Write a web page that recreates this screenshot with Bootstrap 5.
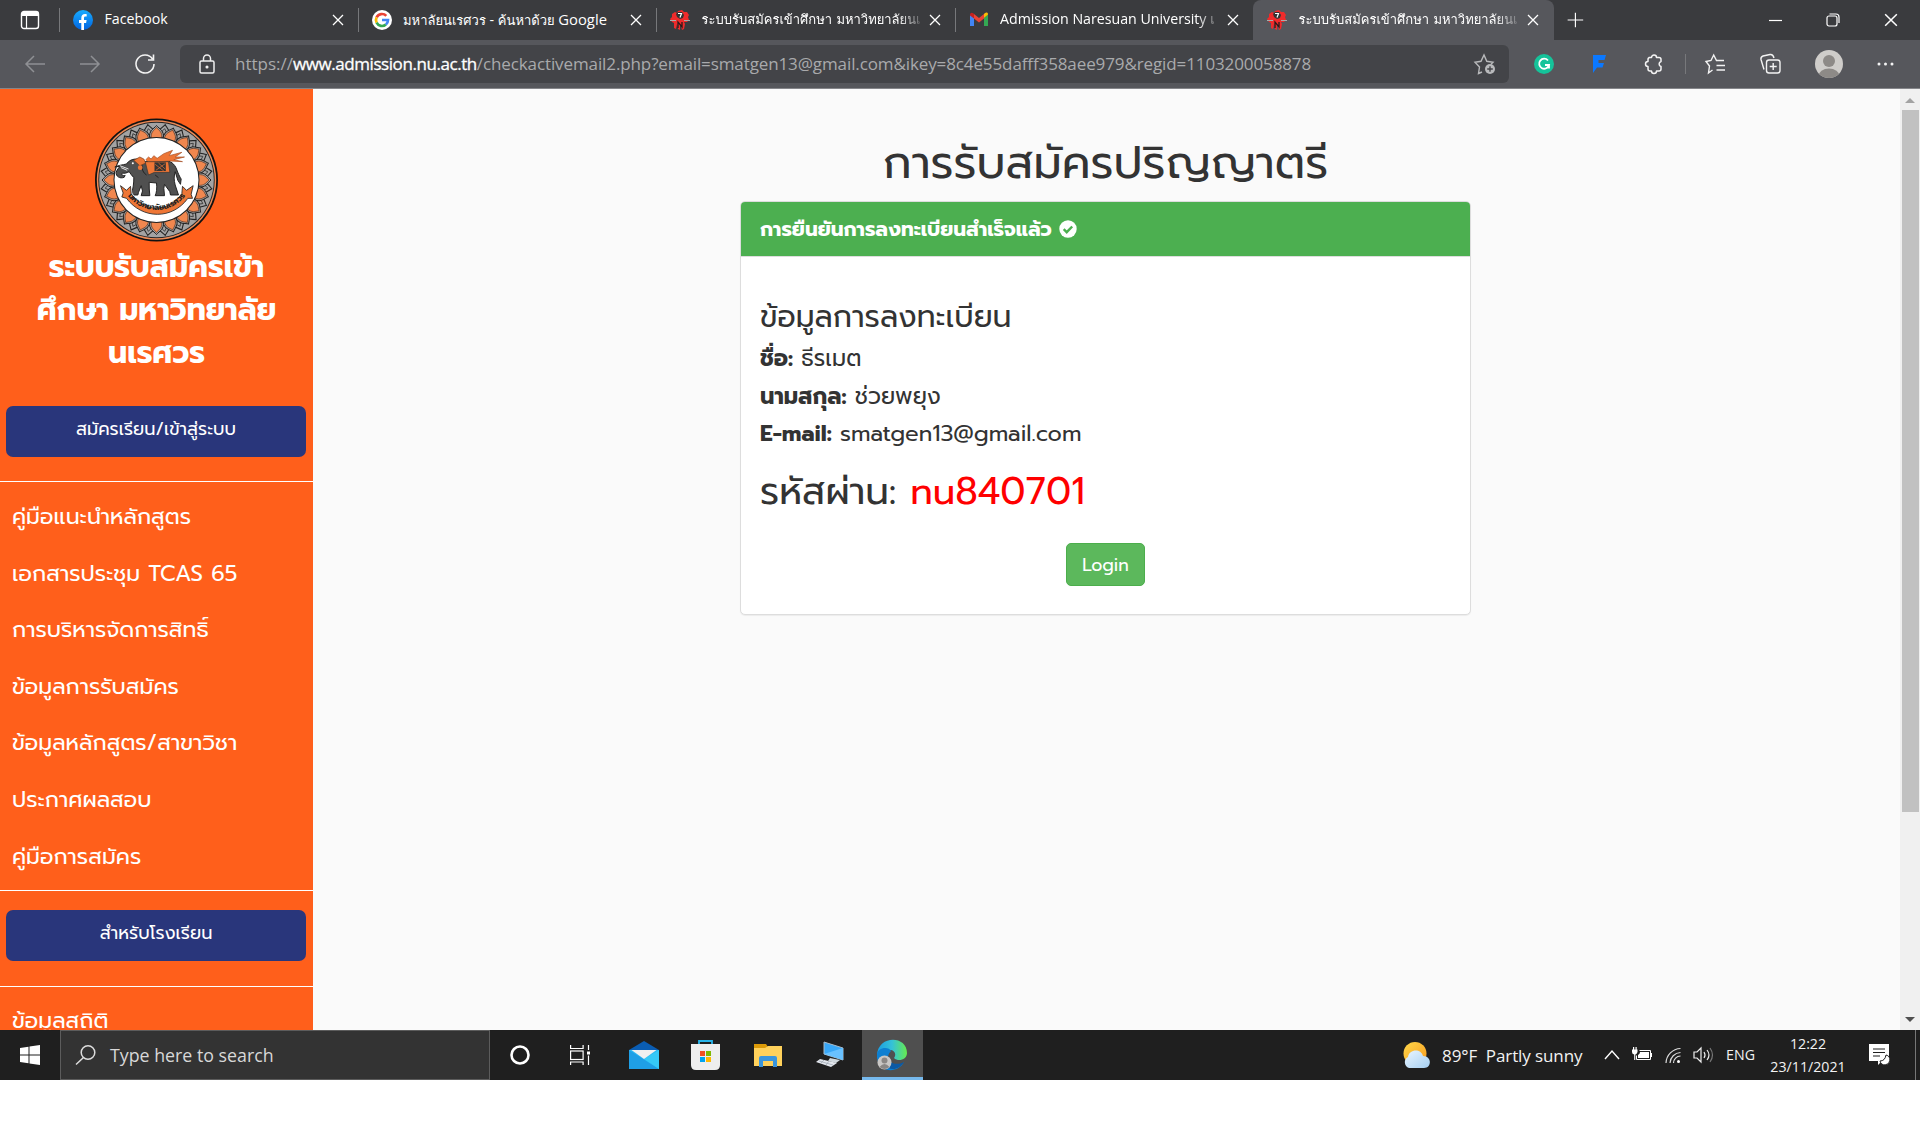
<!DOCTYPE html>
<html lang="th">
<head>
<meta charset="utf-8">
<title>ระบบรับสมัครเข้าศึกษา มหาวิทยาลัยนเรศวร</title>
<link href="https://cdn.jsdelivr.net/npm/bootstrap@5.3.0/dist/css/bootstrap.min.css" rel="stylesheet">
<script src="https://cdn.jsdelivr.net/npm/bootstrap@5.3.0/dist/js/bootstrap.bundle.min.js"></script>
<style>
body{background:#fff;height:1128px;overflow:hidden;font-family:"Open Sans","Noto Sans",Loma,sans-serif}
svg{display:block;flex:none;overflow:visible}
.desktop{height:1080px}
/* browser chrome */
.tabstrip{height:40px;background:#3a3b3e;font-size:14.2px;color:#fff}
.tabmenu{width:59px;padding-left:20px}
.tabitem{width:298.5px;padding:0 14px 0 14px;position:relative}
.tabitem::before{content:"";position:absolute;left:0;top:8px;width:1px;height:24px;background:#77787b}
.tabitem.current{background:#56575c;border-radius:8px 8px 0 0;width:301px;padding-right:15px}
.tabitem.current::before{display:none}
.tabtitle{margin-left:11.5px;width:218px;white-space:nowrap;line-height:38px;height:40px}
.tabtitle.fade-end{-webkit-mask-image:linear-gradient(90deg,#000 90%,transparent 103%);mask-image:linear-gradient(90deg,#000 90%,transparent 103%)}
.thai-sm{font-family:Loma,"Noto Sans Thai",sans-serif;font-size:13px}
.winbtns{padding-right:22px;gap:44px}
.toolbar{height:49px;background:#56575c;border-bottom:1px solid #85868a;padding-left:24px}
.omnibox{width:1329px;height:38px;margin-left:24px;background:#434448;border-radius:6px;padding:0 13px 0 19px;font-size:17px;color:#a9aaac;white-space:nowrap}
.omnibox b{font-weight:400;color:#fff;letter-spacing:-.43px;-webkit-text-stroke:.3px #fff}
.path-part{letter-spacing:-.11px}
/* page */
.viewport{height:941px;background:#fafafa}
.sidebar{width:313px;background:#ff5f1b;color:#fff;font-family:Prompt,"Noto Sans Thai",sans-serif;overflow:hidden}
.sidebar>*{flex-shrink:0}
.sys-title{font-size:30px;font-weight:700;line-height:43px;width:270px;margin-top:4px}
.navy-btn{height:51px;margin:0 7px 0 6px;background:#29367b;border-radius:7px;font-size:17.8px;color:#fff;padding-bottom:2px}
.rule{height:1px;background:#fff}
.side-link{font-size:22.1px;height:56.6px;padding-left:12px;line-height:56.6px;white-space:nowrap}
.main-area{color:#333;font-family:Prompt,"Noto Sans Thai",sans-serif;padding-right:2px}
.main-area h1{font-size:45px;font-weight:400;line-height:54px;margin:0}
.result{width:731px;height:414px;border:1px solid #ddd;border-radius:5px;box-shadow:0 1px 1px rgba(0,0,0,.06);background:#fff}
.result-head{height:55px;background:#4caf50;border-bottom:1px solid #ddd;border-radius:4px 4px 0 0;color:#fff;font-size:20px;font-weight:700;padding-left:19px}
.result-body{padding:41px 19px 0}
.result-body h2{font-size:30px;font-weight:400;line-height:38px;margin:0 0 4px}
.field{font-size:22.5px;line-height:37.7px;margin:0}
.pw{font-size:37.5px;line-height:48px;margin:15px 0 0}
.pw span{color:red}
.login{background:#5cb85c;border:1px solid #4cae4c;color:#fff;font-size:17.5px;width:79px;height:43px;border-radius:5px;padding:0;line-height:40px;margin-top:27px}
.scroller{width:20px;background:#f0f0f0}
.thumb{width:17px;height:702px;background:#c1c1c1;margin-top:1px}
/* taskbar */
.taskbar{height:50px;background:#1f1f1f;color:#f2f2f2}
.searchbox{width:430px;height:50px;background:#333;border:1px solid #5c5c5c;padding-left:14px;font-size:17.8px;color:#d8d8d8}
.tile{width:61px;height:50px;background:#4f4f4f;border-bottom:3px solid #76b9ed}
.clock{font-size:14.2px;line-height:23px;width:76px;text-align:center}
</style>
</head>
<body>
<svg width="0" height="0" class="position-absolute"><defs>
<symbol id="x" viewBox="0 0 12 12"><path d="M1 1l10 10M11 1L1 11" stroke="#fff" stroke-width="1.3" fill="none"/></symbol>
<symbol id="nu" viewBox="0 0 20 20"><path d="M2 4l3-2 2 1 1-2 4-1 2 2 3 0 2 3-1 2 1 3-2 2-3 0 1 2-1 5-2 1-1-4-1 0v4l-2-1-1-5-1 5-2-1 0-5-2-1-2-3 2-2z" fill="#ef2b2b"/><path d="M6 4l2-2 4 0 2 3-1 3-3 1-3-2z" fill="#333"/><path d="M8 3.500h3.500l-1.500 4" stroke="#fff" stroke-width="1.200" fill="none"/><path d="M0 10.500h6M14 10.500h6" stroke="#aaa"/><path d="M8 18v-6l4 5v-5" stroke="#2a1a1a" stroke-width="1.300" fill="none"/></symbol>
</defs></svg>
<div class="desktop d-flex flex-column">
 <header>
  <div class="tabstrip d-flex">
   <div class="tabmenu d-flex align-items-center"><svg width="20" height="20" viewBox="0 0 20 20"><rect x="1.5" y="1.5" width="17" height="17" rx="2.5" fill="none" stroke="#fff" stroke-width="1.4"/><path d="M2 2h16v4H2z" fill="#fff"/><path d="M6.5 6v12" stroke="#fff" stroke-width="1.2"/></svg></div>
   <div class="tabitem d-flex align-items-center"><svg width="20" height="20" viewBox="0 0 20 20"><defs><linearGradient id="fbg" x2="0" y2="1"><stop stop-color="#18acfe"/><stop offset="1" stop-color="#0163e0"/></linearGradient></defs><circle cx="10" cy="10" r="10" fill="url(#fbg)"/><path d="M8.300 20v-7H6v-3h2.300V8c0-2.600 1.400-4 3.700-4 .8 0 1.700.2 1.700.2v2.400h-1.200c-1.200 0-1.500.7-1.500 1.500V10h2.600l-.5 3H11v7z" fill="#fff"/></svg><div class="tabtitle">Facebook</div><svg class="ms-auto" width="12" height="12"><use href="#x"/></svg></div>
   <div class="tabitem d-flex align-items-center"><svg width="20" height="20" viewBox="0 0 20 20"><circle cx="10" cy="10" r="10" fill="#fff"/><g fill="none" stroke-width="2.700"><path d="M4.600 7.300A6 6 0 0 1 14.300 5.900" stroke="#ea4335"/><path d="M4.600 12.700a6 6 0 0 1 0-5.400" stroke="#fbbc05"/><path d="M13.900 14.500a6 6 0 0 1-9.300-1.800" stroke="#34a853"/><path d="M10 10h6a6 6 0 0 1-2.100 4.500" stroke="#4285f4"/></g></svg><div class="tabtitle"><span class="thai-sm">มหาลัยนเรศวร</span> - <span class="thai-sm">ค้นหาด้วย</span> <span style="font-size:14.800px">Google</span></div><svg class="ms-auto" width="12" height="12"><use href="#x"/></svg></div>
   <div class="tabitem d-flex align-items-center"><svg width="20" height="20"><use href="#nu"/></svg><div class="tabtitle fade-end"><span class="thai-sm">ระบบรับสมัครเข้าศึกษา มหาวิทยาลัยนเ</span></div><svg class="ms-auto" width="12" height="12"><use href="#x"/></svg></div>
   <div class="tabitem d-flex align-items-center"><svg width="20" height="20" viewBox="0 0 20 20"><path d="M1 4v12h4V8z" fill="#4285f4"/><path d="M19 4v12h-4V8z" fill="#34a853"/><path d="M15 8l4-3.500V4c0-1.500-1.700-2-3-1l-1 1z" fill="#fbbc04"/><path d="M5 8.500V4l5 4 5-4v4.500l-5 4z" fill="#ea4335"/><path d="M1 5c0-2.200 2-2.800 3.200-1.700L5 4v4.500L1 5.400z" fill="#c5221f"/></svg><div class="tabtitle fade-end">Admission Naresuan University <span class="thai-sm">เ</span></div><svg class="ms-auto" width="12" height="12"><use href="#x"/></svg></div>
   <div class="tabitem current d-flex align-items-center"><svg width="20" height="20"><use href="#nu"/></svg><div class="tabtitle fade-end"><span class="thai-sm">ระบบรับสมัครเข้าศึกษา มหาวิทยาลัยนเ</span></div><svg class="ms-auto" width="12" height="12"><use href="#x"/></svg></div>
   <svg class="align-self-center ms-2 ps-1" width="22" height="18" viewBox="0 0 22 18"><path d="M11.500 0v18M2 9h19" stroke="#fff" stroke-width="1.400"/></svg>
   <div class="winbtns ms-auto d-flex align-items-center"><svg width="13" height="12"><path d="M0 6.500h13" stroke="#fff" stroke-width="1.200"/></svg><svg width="14" height="14" viewBox="0 0 14 14" fill="none" stroke="#fff" stroke-width="1.200"><rect x="1" y="3" width="10" height="10" rx="2"/><path d="M3.500 1H10a3 3 0 0 1 3 3v6"/></svg><svg width="14" height="14"><use href="#x"/></svg></div>
  </div>
  <div class="toolbar d-flex align-items-center">
   <svg width="22" height="20" fill="none" stroke="#8f9094" stroke-width="1.500"><path d="M21 10H2M10 2L2 10l8 8"/></svg>
   <svg style="margin-left:33px" width="22" height="20" fill="none" stroke="#8f9094" stroke-width="1.500"><path d="M1 10h19M12 2l8 8-8 8"/></svg>
   <svg style="margin-left:33px" width="22" height="22" fill="none" stroke="#f3f3f3" stroke-width="1.600"><path d="M18.500 6A9 9 0 1 0 20 11M19.500 1.500V7H14"/></svg>
   <div class="omnibox d-flex align-items-center">
    <svg width="16" height="20" fill="none" stroke="#eee" stroke-width="1.500"><rect x="1" y="7" width="14" height="12" rx="1.500"/><path d="M4.500 7V4.500a3.500 3.500 0 0 1 7 0V7"/><circle cx="8" cy="13" r=".8" fill="#eee"/></svg>
    <div style="margin-left:20px"><span>https://</span><b>www.admission.nu.ac.th</b><span class="path-part">/checkactivemail2.php?email=smatgen13@gmail.com&amp;ikey=8c4e55dafff358aee979&amp;regid=1103200058878</span></div>
    <svg class="ms-auto" width="22" height="22" fill="none" stroke="#b8b9bb" stroke-width="1.400"><path d="M8 19l-3.500 1.500 1-6.500L1 9.200l6-.9L10 2l2.800 6.300 6.200.9-2 2"/><circle cx="16" cy="16" r="5" fill="#b8b9bb" stroke="none"/><path d="M13.200 16h5.600M16 13.200v5.600" stroke="#434448"/></svg>
   </div>
   <svg style="margin-left:25px" width="20" height="20"><circle cx="10" cy="10" r="10" fill="#15c39a"/><path d="M14 6.500a5 5 0 1 0 1 4.500h-4M15 11v3.500" stroke="#fff" stroke-width="1.800" fill="none"/></svg>
   <svg style="margin-left:38px" width="14" height="18"><path d="M1 0h13l-1.500 5H6.500v3H12l-1.500 4.500H5L1 18z" fill="#0b78ff"/></svg>
   <svg style="margin-left:38px" width="20" height="20" fill="none" stroke="#f3f3f3" stroke-width="1.500" stroke-linejoin="round"><path d="M5 3.500h2.500a2.500 2.500 0 0 1 5 0H15q2 0 2 2V7.500a2.600 2.600 0 0 0 0 5v2.500q0 2-2 2h-2.500a2.500 2.500 0 0 1-5 0H6Q4 17 4 15v-2.500a2.500 2.500 0 0 1 0-5V5.500Q4 3.500 6 3.500z"/></svg>
   <div style="width:1px;height:20px;background:#77787b;margin:0 19px 0 21px"></div>
   <svg width="21" height="20" fill="none" stroke="#f3f3f3" stroke-width="1.400"><path d="M7.500 16l-4 3 1-7L1 7.500l5-1L8.700 1l2.800 5.500H19M11.500 11.500H20M11.500 16H20"/></svg>
   <svg style="margin-left:34px" width="21" height="20" fill="none" stroke="#f3f3f3" stroke-width="1.400"><rect x="6.500" y="6" width="13.500" height="13" rx="2.500"/><path d="M13.200 9v7M9.700 12.500h7M4 15.500L1 5.500Q.5 3 3 2l7-1.500q3-.5 4 3.500"/></svg>
   <svg style="margin-left:33.500px" width="28" height="28"><defs><clipPath id="av"><circle cx="14" cy="14" r="14"/></clipPath></defs><g clip-path="url(#av)"><path d="M0 0h28v28H0z" fill="#cfcdca"/><circle cx="14" cy="11" r="6" fill="#8d8a87"/><ellipse cx="14" cy="26" rx="10.500" ry="7.500" fill="#8d8a87"/></g></svg>
   <svg style="margin-left:34px" width="17" height="4" fill="#f3f3f3"><circle cx="2" cy="2" r="1.500"/><circle cx="8.500" cy="2" r="1.500"/><circle cx="15" cy="2" r="1.500"/></svg>
  </div>
 </header>
 <div class="viewport d-flex">
  <aside class="sidebar d-flex flex-column">
   <div class="d-flex flex-column align-items-center text-center" style="padding-top:29px">
    <svg width="124" height="124" viewBox="-61.500 -62 124 124">
     <circle r="61.500" fill="#111"/><circle r="59.700" fill="#ee8a56"/><circle r="58.200" fill="#222"/><circle r="57.300" fill="#a3a3a3"/>
     <g id="petals"></g>
     <circle r="43" fill="#222"/><circle r="42" fill="#fff"/>
     <g transform="scale(.3333) translate(-198 -197)">
      <path d="M88 153c8-2 14-2 20-4 6-10 18-16 34-15 8 2 14 8 22 8l60-4c16 2 28 10 34 26 4 12 10 24 14 30l-2 16-8-12-8-26c-4 14-4 24 0 40l10 30h-24l-2-10-16-22-2 12 2 22h-28c4-8 6-22 4-38l-22-2c0 14 0 26 2 40h-26l4-14-4-16-8 20-2 8h-20c6-20 8-34 8-52-6-6-10-12-14-18-8 4-14 6-20 4-4 6 0 9 8 7l-3 6c-14 5-25-3-24-15 2-9 10-14 10-18l-14 2z" fill="#505050" stroke="#222" stroke-width="3"/>
      <path d="M88 154l26 10M92 160l18 8" stroke="#fff" stroke-width="2.500"/><circle cx="127" cy="147" r="3" fill="#fff"/><path d="M154 150c0 16 4 26 14 32M194 182l10 8" stroke="#222" stroke-width="3" fill="none"/>
      <path d="M130 138l18-10 12 6 6 12-18 8z" fill="#ee7636" stroke="#7a3a18" stroke-width="2"/><circle cx="149" cy="160" r="7" fill="#ee7636"/>
      <path d="M166 136l8-8 8 6 8-10 10 8 20-14 26-10-10 16 38-10-20 14 28 0-32 8 26 6-38-2-64 4z" fill="#ee7636" stroke="#a34f25" stroke-width="2"/>
      <path d="M164 142h70l4 32h-46l-18 8z" fill="#ee7636" stroke="#333" stroke-width="2"/><path d="M192 144h34v26h-34z" fill="#333"/><path d="M194 150l26 20M204 146l20 18M224 148l-28 20" stroke="#ee7636" stroke-width="2"/>
      <path d="M90 214l18 14 12-12 2 22c40 58 112 58 152 0l2-22 12 12 20-14-6 26 4 12-14 0c-46 64-136 64-184 0l-14-4 4-12z" fill="#fff" stroke="#fff" stroke-width="7"/>
      <path d="M90 214l18 14 12-12 2 22c40 58 112 58 152 0l2-22 12 12 20-14-6 26 4 12-14 0c-46 64-136 64-184 0l-14-4 4-12z" fill="#ee7636" stroke="#222" stroke-width="2.500"/>
     </g>
     <path id="arc" d="M-33 9A36.500 36.500 0 0 0 33 9" fill="none"/><text font-family="Prompt,sans-serif" font-weight="700" font-size="7.800" fill="#222" text-anchor="middle"><textPath href="#arc" startOffset="50%">มหาวิทยาลัยนเรศวร</textPath></text>
    </svg>
    <div class="sys-title">ระบบรับสมัครเข้า<br>ศึกษา มหาวิทยาลัย<br>นเรศวร</div>
   </div>
   <div class="navy-btn d-flex align-items-center justify-content-center" style="margin-top:31px">สมัครเรียน/เข้าสู่ระบบ</div>
   <div class="rule" style="margin-top:24px"></div>
   <nav class="flex-column" style="padding-top:7px;height:408px">
    <div class="side-link">คู่มือแนะนำหลักสูตร</div><div class="side-link">เอกสารประชุม TCAS 65</div><div class="side-link">การบริหารจัดการสิทธิ์</div><div class="side-link">ข้อมูลการรับสมัคร</div><div class="side-link">ข้อมูลหลักสูตร/สาขาวิชา</div><div class="side-link">ประกาศผลสอบ</div><div class="side-link">คู่มือการสมัคร</div>
   </nav>
   <div class="rule"></div>
   <div class="navy-btn d-flex align-items-center justify-content-center" style="margin-top:19px">สำหรับโรงเรียน</div>
   <div class="rule" style="margin-top:25px"></div>
   <div class="side-link" style="margin-top:6px">ข้อมูลสถิติ</div>
  </aside>
  <main class="main-area flex-grow-1 d-flex flex-column align-items-center">
   <h1 style="margin-top:47px">การรับสมัครปริญญาตรี</h1>
   <section class="result" style="margin-top:11px">
    <div class="result-head d-flex align-items-center">การยืนยันการลงทะเบียนสำเร็จแล้ว<svg style="margin-left:7px" width="18" height="18"><circle cx="9" cy="9" r="8.700" fill="#fff"/><path d="M4.700 9.200l3 3 5.500-5.700" fill="none" stroke="#4caf50" stroke-width="2.400"/></svg></div>
    <div class="result-body">
     <h2>ข้อมูลการลงทะเบียน</h2>
     <p class="field"><b>ชื่อ:</b> ธีรเมต</p><p class="field"><b>นามสกุล:</b> ช่วยพยุง</p><p class="field"><b>E-mail:</b> smatgen13@gmail.com</p>
     <p class="pw">รหัสผ่าน: <span>nu840701</span></p>
     <div class="text-center"><button class="btn login">Login</button></div>
    </div>
   </section>
  </main>
  <div class="scroller d-flex flex-column align-items-center"><svg width="10" height="20"><path d="M0 14l5-5 5 5z" fill="#a3a3a3"/></svg><div class="thumb"></div><svg class="mt-auto" width="10" height="20"><path d="M0 7h10l-5 5z" fill="#505050"/></svg></div>
 </div>
 <footer class="taskbar d-flex align-items-center">
  <div class="d-flex justify-content-center" style="width:60px"><svg width="20" height="20" fill="#fff"><path d="M0 3l8.500-1.200v7.700H0zM9.500 1.600L20 0v9.500H9.500zM0 10.500h8.500v7.700L0 17zM9.500 10.500H20V20L9.500 18.400z"/></svg></div>
  <div class="searchbox d-flex align-items-center"><svg width="21" height="20" fill="none" stroke="#ddd" stroke-width="1.500"><circle cx="13" cy="7.500" r="6.800"/><path d="M8.500 12.500L1 19.500"/></svg><span style="margin-left:14px">Type here to search</span></div>
  <svg style="margin-left:20px" width="20" height="20"><circle cx="10" cy="10" r="8.500" fill="none" stroke="#fff" stroke-width="2.600"/></svg>
  <svg style="margin-left:40px" width="20" height="20" fill="none" stroke="#fff" stroke-width="1.200"><rect x=".6" y="6" width="12.500" height="8.500"/><path d="M.6 0v3.500h12.500V0M.6 20v-3h12.500v3M18.500 0v5M18.500 10.500V20"/><path d="M17 6.500h3v3h-3z" fill="#fff" stroke="none"/></svg>
  <svg style="margin-left:39px" width="30" height="28"><path d="M0 9L15 0l15 9v5H0z" fill="#0a5db3"/><path d="M0 9h30v19H0z" fill="#2ab8f2"/><path d="M0 9l30 19H0z" fill="#1f9fe6"/><path d="M15 18l15-9v19z" fill="#35c9f7"/><path d="M2.500 9h25L15 18z" fill="#f0f0f0"/></svg>
  <svg style="margin-left:32px" width="29" height="30"><path d="M8 5V1h13v4" fill="none" stroke="#28b4ea" stroke-width="1.800"/><path d="M0 4h29v21q0 5-5 5H5q-5 0-5-5z" fill="#eee"/><path d="M9 11h5v5H9z" fill="#f25022"/><path d="M15 11h5v5h-5z" fill="#7fba00"/><path d="M9 17h5v5H9z" fill="#00a4ef"/><path d="M15 17h5v5h-5z" fill="#ffb900"/></svg>
  <svg style="margin-left:34px" width="28" height="24"><path d="M0 1h12l2 3-2 2H0z" fill="#dc9a08"/><path d="M0 5h11l3-2h14v20H0z" fill="#ffd15b"/><path d="M5 24v-9q0-2 2-2h14q2 0 2 2v9h-4v-6h-10v6z" fill="#3a95dc"/></svg>
  <svg style="margin-left:34px" width="28" height="26"><path d="M8 0l19 6v12L8 12z" fill="#39a8f8" stroke="#a8bccb"/><path d="M27 6v12L8 12z" fill="#69c1ff"/><path d="M14 16l10 2-4 3-8-2z" fill="#d0d8de"/><path d="M4 17l17 4-6 4-15-5z" fill="#e3e7ee"/><path d="M3 19l14 4M8 18l-3 3M13 19l-3 4" stroke="#9aa4ae" stroke-width=".7"/></svg>
  <div class="tile d-flex justify-content-center" style="margin-left:18px;padding-top:10px"><svg width="31" height="31"><defs><linearGradient id="eg"><stop stop-color="#1b9de2"/><stop offset=".5" stop-color="#35c1d8"/><stop offset="1" stop-color="#66eb4e"/></linearGradient></defs><path d="M0 15C1-5 30-5 30 13c0 7-9 9-13 5 2-2 2-7-3-8-8-1-13 5-14 10z" fill="url(#eg)"/><path d="M0 15c0-8 12-9 14-4-6 6-2 14 5 15 3 0 5-1 8-4-4 8-15 11-22 5C1 24 0 19 0 15z" fill="#0d7fd2"/><path d="M11 14c-3 7 7 13 16 8-5 9-16 9-19 2z" fill="#0c59a4"/><circle cx="7.500" cy="22.500" r="7" fill="#c9c7c5"/><circle cx="7.500" cy="20.500" r="3" fill="#8a8785"/><path d="M2.500 27q5-6 10 0-5 4-10 0z" fill="#8a8785"/></svg></div>
  <div class="ms-auto d-flex align-items-center">
   <svg width="27" height="27"><defs><linearGradient id="sun" x2="1" y2="1"><stop stop-color="#ffd84a"/><stop offset="1" stop-color="#f79a1e"/></linearGradient><linearGradient id="cl" x2="1" y2="1"><stop stop-color="#eaf6ff"/><stop offset="1" stop-color="#a5cff2"/></linearGradient></defs><circle cx="12" cy="11.500" r="11.500" fill="url(#sun)"/><path d="M6 26a6 6 0 0 1-1-11c1-8 13-9 15-1 9 0 9 12 1 12z" fill="url(#cl)"/></svg>
   <span style="margin-left:12px;padding-top:2px;font-size:17px;letter-spacing:-.1px;white-space:pre;width:149px">89°F  Partly sunny</span>
   <svg style="margin-left:13px" width="16" height="10" fill="none" stroke="#fff" stroke-width="1.400"><path d="M1 9l7-8 7 8"/></svg>
   <svg style="margin-left:12px" width="20" height="16"><path d="M7.500 3.500h11v9h-14v-4" fill="none" stroke="#fff"/><path d="M8 5h9v6H6V8q2-1 2-3zM19 6h1v4h-1zM0 2.500h5.500V5q-1 2.500-2.200 2.500V13H2.200V7.500Q0 7 0 5zM1 0h1.200v3H1zM3.500 0h1.200v3H3.500z" fill="#fff"/></svg>
   <svg style="margin-left:13px" width="16" height="17" fill="none" stroke="#ddd" stroke-width="1.200"><path d="M1 16A15 15 0 0 1 15.500 1.500M5 16A11 11 0 0 1 15.500 5.500M8.500 16a7 7 0 0 1 7-7"/><circle cx="13.500" cy="14.500" r="1.500" fill="#fff" stroke="none"/></svg>
   <svg style="margin-left:12px" width="21" height="18" fill="none" stroke="#eee" stroke-width="1.200"><path d="M1 6h3l4-4v14l-4-4H1z"/><path d="M11 6q2 3 0 6M14 4q4 5 0 10"/><path d="M17 2q5 7 0 14" stroke="#777"/></svg>
   <span style="margin-left:12px;font-size:14.200px">ENG</span>
   <div class="clock" style="margin-left:15px">12:22<br>23/11/2021</div>
   <svg style="margin-left:23px" width="21" height="22"><path d="M0 0h20v17h-7l-4 4v-4H0z" fill="#fff"/><path d="M4 5h12M4 8.500h12M4 12h7" stroke="#1f1f1f" stroke-width="1.200"/><path d="M17 11a5 5 0 1 1-6 6q5 0 6-6z" fill="#fff" stroke="#1f1f1f"/></svg>
   <div style="width:1px;height:50px;background:#777;margin:0 4px 0 25px"></div>
  </div>
 </footer>
</div>
<script>
/* lotus ring: petals spaced evenly around the seal */
let petals='';
for(let i=0;i<20;i++){petals+=`<g transform="rotate(${i*18+9})"><path d="M-6 -43C-7 -50 -3 -52 0 -56 3 -52 7 -50 6 -43z" fill="#a3a3a3" stroke="#222" stroke-width="1.100"/><path d="M-3 -46Q-2 -50 0 -52 2 -50 3 -46z" fill="#a3a3a3" stroke="#333" stroke-width=".8"/></g>`}
for(let i=0;i<20;i++){petals+=`<g transform="rotate(${i*18})"><path d="M-6.800 -42C-8 -49 -3 -51 0 -54.500 3 -51 8 -49 6.800 -42z" fill="#a3a3a3" stroke="#222"/><path d="M-5.200 -42C-6 -48 -2.500 -49.500 0 -52.500 2.500 -49.500 6 -48 5.200 -42z" fill="#f0874f" stroke="#5a3420" stroke-width=".7"/></g>`}
document.getElementById('petals').innerHTML=petals;
</script>
</body>
</html>
